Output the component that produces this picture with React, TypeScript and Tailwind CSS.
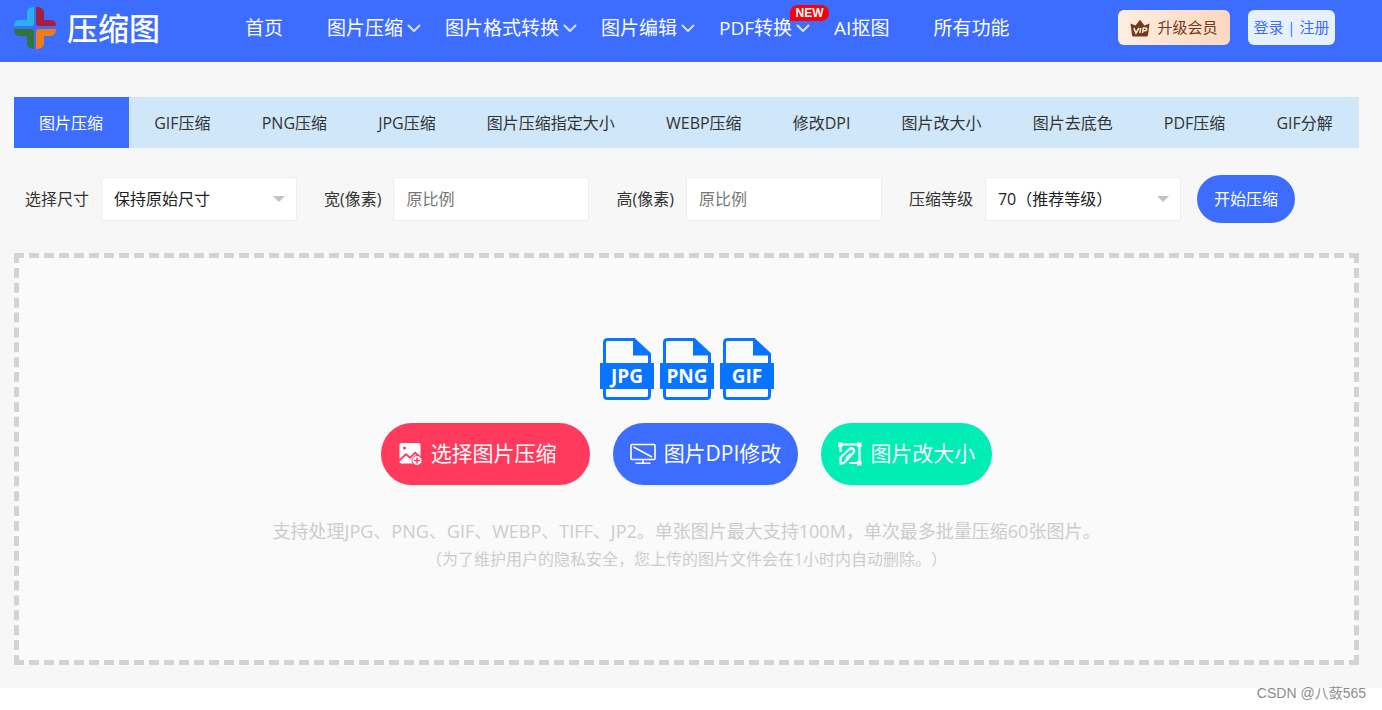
import React from "react";

type NavItem = { label: string; menu?: boolean; isNew?: boolean; space: string };

const navItems: NavItem[] = [
  { label: "首页", space: "mr-11" },
  { label: "图片压缩", menu: true, space: "mr-6" },
  { label: "图片格式转换", menu: true, space: "mr-6" },
  { label: "图片编辑", menu: true, space: "mr-6" },
  { label: "PDF转换", menu: true, isNew: true, space: "mr-6" },
  { label: "AI抠图", space: "mr-11" },
  { label: "所有功能", space: "" },
];

const tabs = [
  "图片压缩",
  "GIF压缩",
  "PNG压缩",
  "JPG压缩",
  "图片压缩指定大小",
  "WEBP压缩",
  "修改DPI",
  "图片改大小",
  "图片去底色",
  "PDF压缩",
  "GIF分解",
];

function Logo() {
  return (
    <a href="#" className="flex items-center gap-[10px] text-white">
      <svg width="43" height="44" viewBox="0 0 43 44" aria-hidden="true">
        <path d="M20 1h-1q-6 1-6 6v7H5q-5 0-5 6h17q3 0 3-3z" fill="#29b2ea" />
        <path d="M22 1h2q6 1 6 6v7h7q5 0 5 6H25q-3 0-3-3z" fill="#a31f3d" />
        <path d="M20 43h-1q-6-1-6-6v-7H5q-5-1-5-7h17q3 0 3 3z" fill="#327538" />
        <path d="M22 43h2q6-1 6-6v-7h7q5-1 5-7H25q-3 0-3 3z" fill="#f27a18" />
      </svg>
      <span className="text-[31px] leading-10 font-medium">压缩图</span>
    </a>
  );
}

function Chevron() {
  return (
    <svg width="14" height="9" viewBox="0 0 14 9" fill="none" stroke="#d6e0ff" strokeWidth="2" strokeLinecap="round" strokeLinejoin="round" aria-hidden="true">
      <path d="M1.5 1.5 7 7l5.500-5.500" />
    </svg>
  );
}

function NewBadge() {
  return (
    <span className="absolute -top-[9px] right-[-19px] flex h-4 w-[39px] items-center justify-center rounded-t-full rounded-br-full bg-[#fb0007] font-['Liberation_Sans'] text-xs leading-4 font-bold text-white">
      NEW
    </span>
  );
}

function Crown() {
  return (
    <svg width="20" height="18" viewBox="0 0 20 18" aria-hidden="true">
      <path d="M.5 4.500 5.500 6.500 10 .8l4.500 5.700 5-2L18 16q-.2 1.500-1.500 1.500h-13Q2.200 17.500 2 16z" fill="#713a1b" />
      <path d="m3.800 9 2.200 5L9 9M10.700 9l-.8 5M12.500 14l.8-5h2.200q1.600 0 1.200 1.500-.3 1.200-1.700 1.200h-2" fill="none" stroke="#fdeadb" strokeWidth="1.500" />
    </svg>
  );
}

function FileIcon({ type }: { type: string }) {
  return (
    <svg width="54" height="62" viewBox="0 0 54 62" role="img" aria-label={type}>
      <path d="M7 1.500h27L49.500 16v41.500q0 3-3 3H7.500q-3 0-3-3V4.500q0-3 3-3z" fill="#fbfbfb" stroke="#0874ff" strokeWidth="3" />
      <path d="M33 1h2l15.500 15v1.500H33z" fill="#0874ff" />
      <path d="M0 25h54v26H0z" fill="#0874ff" />
      <text x="27" y="45" textAnchor="middle" fill="#fff" fontFamily="'Open Sans', sans-serif" fontSize="19" fontWeight="700">
        {type}
      </text>
    </svg>
  );
}

function PictureIcon() {
  return (
    <svg width="24" height="24" viewBox="0 0 24 24" aria-hidden="true">
      <path d="M2.500 1h17Q21.500 1 21.500 3v11L16 9.500l-5 5-4-3.500-6.500 6V3q0-2 2-2z" fill="#fff" />
      <circle cx="5.500" cy="6" r="1.500" fill="#ff3a5c" />
      <path d="M.5 19.500 7 13.500l4 3.500 5-5 2 1.500-5 5 1 3H2.500q-2 0-2-2z" fill="#fff" />
      <circle cx="18" cy="18.500" r="5" fill="#fff" stroke="#ff3a5c" strokeWidth="1" />
      <path d="M18 15.500v6M15 18.500h6" stroke="#ff3a5c" strokeWidth="1.500" />
    </svg>
  );
}

function MonitorIcon() {
  return (
    <svg width="26" height="22" viewBox="0 0 26 22" fill="none" stroke="#fff" strokeWidth="1.600" aria-hidden="true">
      <rect x="1" y="1.500" width="24" height="15" rx="1" />
      <path d="M3.500 4 22 14M13 16.500V20M5.500 20.200h15" />
    </svg>
  );
}

function ResizeIcon() {
  return (
    <svg width="24" height="24" viewBox="0 0 24 24" fill="none" stroke="#fff" strokeWidth="2.200" aria-hidden="true">
      <path d="M3 2.500h18.500V21H11M2.500 3v7" />
      <path d="M0 .5h4.500V5H0zM19 .5h4.500V5H19zM19 19h4.500v4.500H19z" fill="#fff" stroke="none" />
      <path d="M2.500 21.500v-6L11.500 7q2-1.500 3.800 0t0 3.800L6.500 20.500q-1.500 1.200-4 1zM8 16.500l4.500-4.500" />
    </svg>
  );
}

const fieldClass =
  "h-11 w-[196px] appearance-none rounded-xs border border-[#eeeeee] bg-white px-3 text-base text-[#222222] outline-none placeholder:text-[#777777]";

function SelectField({ id, label, value }: { id: string; label: string; value: string }) {
  return (
    <div className="flex items-center gap-3">
      <label htmlFor={id}>{label}</label>
      <div className="relative">
        <select id={id} className={fieldClass} defaultValue={value}>
          <option value={value}>{value}</option>
        </select>
        <svg className="pointer-events-none absolute top-[19px] right-3" width="12" height="6" viewBox="0 0 12 6" aria-hidden="true">
          <path d="M0 0h12L6 6z" fill="#c2c2c2" />
        </svg>
      </div>
    </div>
  );
}

function TextField({ id, label }: { id: string; label: string }) {
  return (
    <div className="flex items-center gap-3">
      <label htmlFor={id}>{label}</label>
      <input id={id} type="text" placeholder="原比例" className={fieldClass} />
    </div>
  );
}

const actionClass = "flex h-[62px] items-center rounded-full text-[21px] text-white shadow-xs";

export default function App() {
  return (
    <div className="min-h-screen bg-white font-['Open_Sans','Noto_Sans_CJK_SC',sans-serif] text-base text-[#333333] [text-spacing-trim:space-all]">
      <div className="bg-[#f7f7f7] pb-[23px]">
        <header className="flex h-[62px] items-start bg-[#3c6dff] pr-[47px] pl-[14px] whitespace-nowrap">
          <div className="mt-1.5 w-[231px]">
            <Logo />
          </div>
          <nav className="mt-3.5 flex text-[19px] leading-7 text-white">
            {navItems.map((item) => (
              <a key={item.label} href="#" className={`relative flex items-center gap-1 ${item.space}`}>
                {item.label}
                {item.menu && <Chevron />}
                {item.isNew && <NewBadge />}
              </a>
            ))}
          </nav>
          <div className="mt-2.5 ml-auto flex gap-[18px] text-[15px]">
            <button className="flex h-[35px] w-28 items-center justify-center gap-[7px] rounded-md bg-gradient-to-r from-[#fdeee2] to-[#fcd8bf] text-[#713a1b]">
              <Crown />
              升级会员
            </button>
            <button className="h-[35px] w-[87px] rounded-md bg-[#e7f1fe] text-[#3c6dff]">登录 | 注册</button>
          </div>
        </header>

        <main className="mr-[23px] ml-[14px] pt-[35px]">
          <nav className="flex h-[51px] bg-[#d0e7fa] whitespace-nowrap">
            {tabs.map((tab, i) => (
              <a
                key={tab}
                href="#"
                className={`flex grow items-center justify-center pr-[25px] pl-6 ${i === 0 ? "bg-[#3c6dff] text-white" : ""}`}
              >
                {tab}
              </a>
            ))}
          </nav>

          <form className="mt-[27px] flex items-center gap-[27px] pl-[11px] whitespace-nowrap" onSubmit={(e) => e.preventDefault()}>
            <SelectField id="size" label="选择尺寸" value="保持原始尺寸" />
            <TextField id="width" label="宽(像素)" />
            <TextField id="height" label="高(像素)" />
            <div className="flex items-center gap-4">
              <SelectField id="level" label="压缩等级" value="70（推荐等级）" />
              <button type="submit" className="h-12 rounded-full bg-[#3c6dff] px-[17px] text-white">
                开始压缩
              </button>
            </div>
          </form>

          <section className="mt-[30px] flex flex-col items-center border-[5px] border-dashed border-[#d3d3d3] bg-[#fafafa] pt-20 pb-[87px]">
            <div className="flex gap-1.5">
              <FileIcon type="JPG" />
              <FileIcon type="PNG" />
              <FileIcon type="GIF" />
            </div>
            <div className="mt-[23px] flex gap-[23px] whitespace-nowrap">
              <button className={`${actionClass} gap-2 bg-[#ff3a5c] pr-[33px] pl-[18px]`}>
                <PictureIcon />
                选择图片压缩
              </button>
              <button className={`${actionClass} gap-2 bg-[#3c6dff] px-[17px]`}>
                <MonitorIcon />
                图片DPI修改
              </button>
              <button className={`${actionClass} gap-2 bg-[#00edb5] px-[17px]`}>
                <ResizeIcon />
                图片改大小
              </button>
            </div>
            <p className="mt-8 text-center text-lg leading-7 text-[#cccccc]">
              支持处理JPG、PNG、GIF、WEBP、TIFF、JP2。单张图片最大支持100M，单次最多批量压缩60张图片。
            </p>
            <p className="text-center text-base leading-7 text-[#cccccc]">
              （为了维护用户的隐私安全，您上传的图片文件会在1小时内自动删除。）
            </p>
          </section>
        </main>
      </div>
      <footer className="pr-4 text-right font-['Liberation_Sans','Noto_Sans_CJK_SC',sans-serif] text-sm leading-[11px] text-[#8c8c8c]">
        CSDN @八蔹565
      </footer>
    </div>
  );
}
